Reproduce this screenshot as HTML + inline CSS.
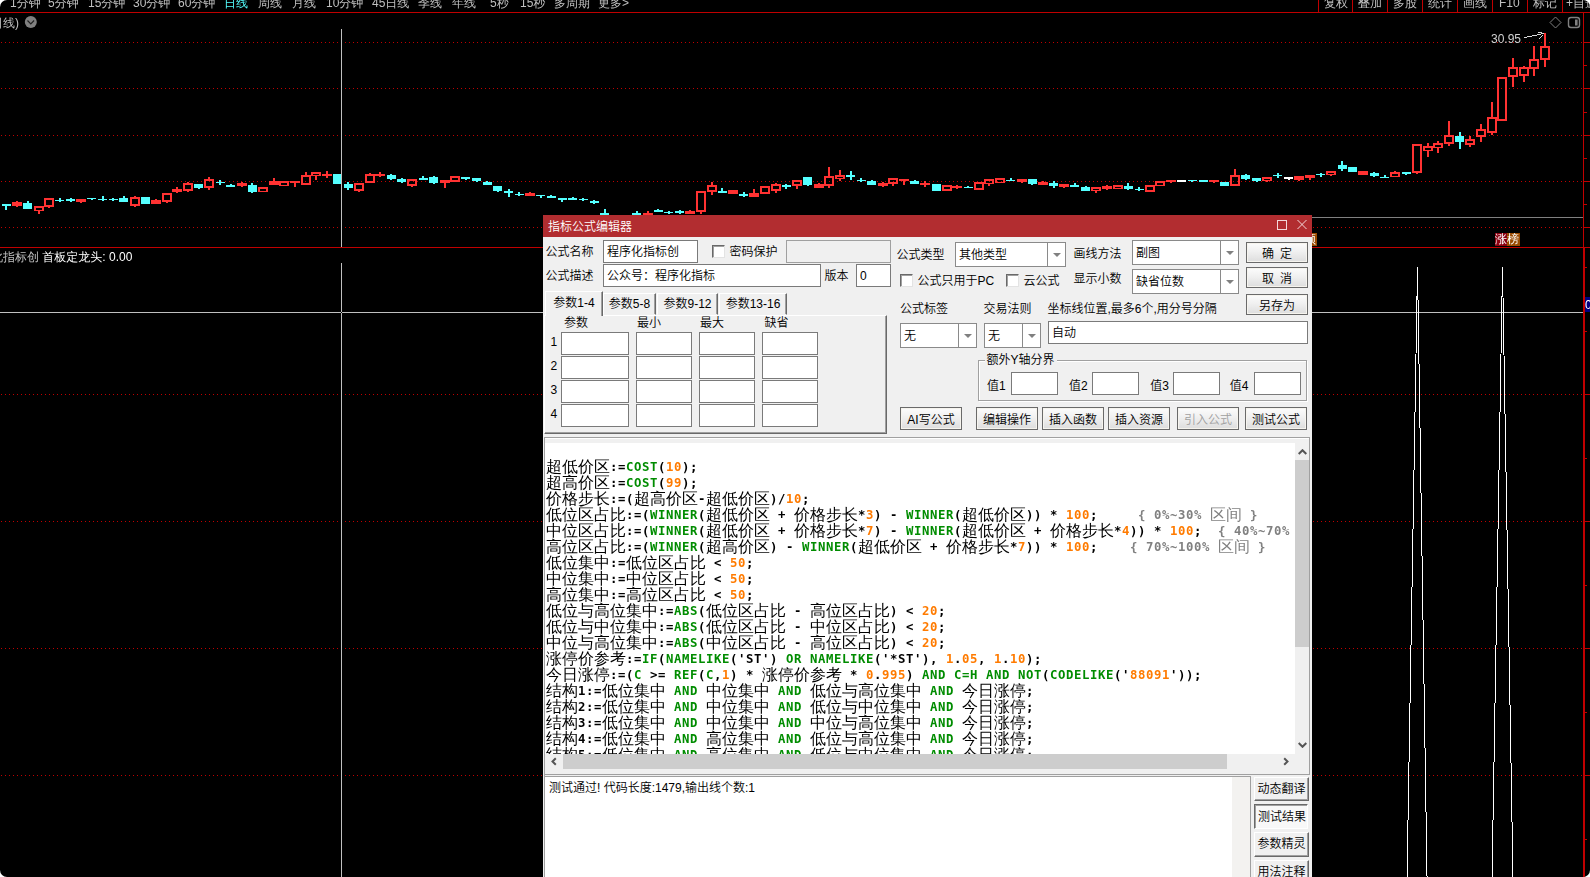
<!DOCTYPE html><html lang="zh-CN"><head><meta charset="utf-8"><title>指标公式编辑器</title>
<style>html,body{margin:0;padding:0;background:#fff}
body{width:1590px;height:877px;overflow:hidden;position:relative;}
#root{position:absolute;left:0;top:0;width:1590px;height:877px;overflow:hidden;background:#000;border-radius:7px;font-family:"Liberation Sans","Noto Sans CJK SC",sans-serif;font-size:12px}
#chart{position:absolute;left:0;top:0}
.t{will-change:transform;font-family:"Liberation Sans","WenQuanYi Zen Hei","Noto Sans CJK SC",sans-serif;position:absolute;white-space:nowrap;color:#C0C0C0;font-size:12px;line-height:14px;height:14px}
.tb{color:#C0C0C0}
#dlg{font-weight:350;position:absolute;left:543px;top:215px;width:769px;height:662px;background:#F0F0F0;color:#000;overflow:hidden}
#dlg div{box-sizing:border-box}
.tt{position:absolute;background:#B22D30;color:#fff}
.tt span{position:absolute;left:5px;top:4px;line-height:16px}
.ti{position:absolute}
.lb{position:absolute;white-space:nowrap;line-height:16px;height:16px}
.in{position:absolute;background:#fff;border:1px solid #7A7A7A}
.in span{position:absolute;left:3px;top:50%;margin-top:-7.5px;line-height:16px;white-space:nowrap}
.in.dis{background:#F0F0F0;border-color:#A0A0A0}
.cb{position:absolute;background:#fff;border:1px solid #8A8A8A}
.cb span{position:absolute;left:3px;top:50%;margin-top:-7.5px;line-height:16px;white-space:nowrap}
.cb i{position:absolute;top:0;bottom:0;width:1px;background:#8A8A8A}
.cb b{position:absolute;top:50%;margin-top:-2px;width:0;height:0;border-left:4px solid transparent;border-right:4px solid transparent;border-top:4px solid #808080}
.ck{position:absolute;background:#fff;border:1px solid;border-color:#696969 #E3E3E3 #E3E3E3 #696969;box-shadow:inset 1px 1px 0 #A0A0A0}
.bt{position:absolute;border:1px solid #6A6A6A;background:linear-gradient(#FCFCFC,#F0F0F0 45%,#DDDDDD);box-shadow:inset 0 0 0 1px #F6F4EE;display:flex;align-items:center;justify-content:center;padding-top:2px;white-space:nowrap;line-height:16px}
.bt.dsb{color:#A0A0A0}
.tab{position:absolute;border:1px solid;border-color:#fff #696969 transparent #fff;box-shadow:inset -1px 0 0 #A0A0A0;text-align:center;line-height:21px;white-space:nowrap;background:#F0F0F0}
.tab.sel{line-height:22px;border-bottom:none}
.pn{position:absolute;border:1px solid;border-color:#fff #696969 #696969 #fff;box-shadow:inset -1px -1px 0 #A0A0A0}
.gb{position:absolute;border:1px solid #A0A0A0;box-shadow:inset 1px 1px 0 #fff, 1px 1px 0 #fff}
.gb span{position:absolute;left:5.5px;top:-9px;background:#F0F0F0;padding:0 2px;line-height:16px}
.sb{position:absolute;background:#F0F0F0}
.sb .th{position:absolute;background:#CDCDCD}
.sb .ar{position:absolute}
.rb{position:absolute;border:1px solid;border-color:#fff #696969 #696969 #fff;box-shadow:inset -1px -1px 0 #A0A0A0;text-align:center;line-height:22px;white-space:nowrap;background:#F0F0F0}
.rb.dn{padding:1px 0 0 2px;border-color:#696969 #fff #fff #696969;box-shadow:inset 1px 1px 0 #A0A0A0;background:#F8F8F8}
#ed{position:absolute;left:2px;top:228px;width:750px;height:311px;background:#fff;overflow:hidden}
#code{position:absolute;left:1px;top:16px;will-change:transform}
.ln{height:16px;line-height:16px;white-space:pre;font-size:0}
.ln span{vertical-align:top;display:inline-block;height:16px;line-height:16px}
.ln .cm{display:inline}
.z{font-family:"Liberation Mono","WenQuanYi Zen Hei","Noto Serif CJK SC",monospace;font-size:16px;font-weight:400;color:#000;position:relative;top:1px}
.a{font-family:"DejaVu Sans Mono","Liberation Mono",monospace;font-size:12.3px;letter-spacing:0.5948px;font-weight:bold;color:#000}
.a.k{color:#008C00}
.a.n{color:#FF7B00}
.cm .a,.cm .z{color:#808080}
</style>
</head><body><div id="root">
<svg id="chart" width="1590" height="877" viewBox="0 0 1590 877" shape-rendering="crispEdges">
<line x1="1" x2="1583" y1="42.5" y2="42.5" stroke="#C00000" stroke-dasharray="1 3"/>
<line x1="1584" x2="1590" y1="42.5" y2="42.5" stroke="#C00000"/>
<line x1="1" x2="1583" y1="88.5" y2="88.5" stroke="#C00000" stroke-dasharray="1 3"/>
<line x1="1584" x2="1590" y1="88.5" y2="88.5" stroke="#C00000"/>
<line x1="1" x2="1583" y1="135.5" y2="135.5" stroke="#C00000" stroke-dasharray="1 3"/>
<line x1="1584" x2="1590" y1="135.5" y2="135.5" stroke="#C00000"/>
<line x1="1" x2="1583" y1="181.5" y2="181.5" stroke="#C00000" stroke-dasharray="1 3"/>
<line x1="1584" x2="1590" y1="181.5" y2="181.5" stroke="#C00000"/>
<line x1="1" x2="1583" y1="227.5" y2="227.5" stroke="#C00000" stroke-dasharray="1 3"/>
<line x1="1584" x2="1590" y1="227.5" y2="227.5" stroke="#C00000"/>
<line x1="1584" x2="1587" y1="65.5" y2="65.5" stroke="#C00000"/>
<line x1="1584" x2="1587" y1="112.5" y2="112.5" stroke="#C00000"/>
<line x1="1584" x2="1587" y1="158.5" y2="158.5" stroke="#C00000"/>
<line x1="1584" x2="1587" y1="204.5" y2="204.5" stroke="#C00000"/>
<line x1="1" x2="1583" y1="394.5" y2="394.5" stroke="#C00000" stroke-dasharray="1 3"/>
<line x1="1584" x2="1590" y1="394.5" y2="394.5" stroke="#C00000"/>
<line x1="1" x2="1583" y1="521.5" y2="521.5" stroke="#C00000" stroke-dasharray="1 3"/>
<line x1="1584" x2="1590" y1="521.5" y2="521.5" stroke="#C00000"/>
<line x1="1" x2="1583" y1="648.5" y2="648.5" stroke="#C00000" stroke-dasharray="1 3"/>
<line x1="1584" x2="1590" y1="648.5" y2="648.5" stroke="#C00000"/>
<line x1="1" x2="1583" y1="775.5" y2="775.5" stroke="#C00000" stroke-dasharray="1 3"/>
<line x1="1584" x2="1590" y1="775.5" y2="775.5" stroke="#C00000"/>
<line x1="1584" x2="1587" y1="267.5" y2="267.5" stroke="#C00000"/>
<line x1="1584" x2="1587" y1="331.5" y2="331.5" stroke="#C00000"/>
<line x1="1584" x2="1587" y1="458.5" y2="458.5" stroke="#C00000"/>
<line x1="1584" x2="1587" y1="585.5" y2="585.5" stroke="#C00000"/>
<line x1="1584" x2="1587" y1="712.5" y2="712.5" stroke="#C00000"/>
<line x1="1584" x2="1587" y1="839.5" y2="839.5" stroke="#C00000"/>
<rect x="0" y="12" width="1590" height="1" fill="#C00000"/>
<rect x="0" y="247" width="1590" height="1" fill="#C00000"/>
<rect x="1583" y="12" width="1" height="865" fill="#C00000"/><rect x="1584" y="248" width="1" height="629" fill="#C00000"/>
<rect x="1318" y="0" width="1" height="12" fill="#C00000"/>
<rect x="1352" y="0" width="1" height="12" fill="#C00000"/>
<rect x="1387" y="0" width="1" height="12" fill="#C00000"/>
<rect x="1422" y="0" width="1" height="12" fill="#C00000"/>
<rect x="1457" y="0" width="1" height="12" fill="#C00000"/>
<rect x="1492" y="0" width="1" height="12" fill="#C00000"/>
<rect x="1527" y="0" width="1" height="12" fill="#C00000"/>
<rect x="1562" y="0" width="1" height="12" fill="#C00000"/>
<rect x="1312" y="217" width="271" height="1" fill="#808080"/>
<rect x="5" y="204" width="2" height="6" fill="#54FFFF"/>
<rect x="2" y="204" width="9" height="2" fill="#54FFFF"/>
<rect x="16" y="201" width="2" height="6" fill="#FF3232"/>
<rect x="12" y="202" width="10" height="4" fill="#FF3232"/>
<rect x="27" y="201" width="2" height="8" fill="#54FFFF"/>
<rect x="23" y="203" width="9" height="6" fill="#54FFFF"/>
<rect x="38" y="211" width="2" height="3" fill="#FF3232"/>
<path d="M34 206h10v5h-10z M36 207.5v2.0h6v-2.0z" fill="#FF3232" fill-rule="evenodd"/>
<rect x="48" y="207" width="2" height="1" fill="#FF3232"/>
<path d="M44 198h10v9h-10z M46 200v5h6v-5z" fill="#FF3232" fill-rule="evenodd"/>
<rect x="59" y="198" width="2" height="4" fill="#54FFFF"/>
<rect x="55" y="200" width="9" height="1" fill="#54FFFF"/>
<rect x="70" y="198" width="2" height="4" fill="#54FFFF"/>
<rect x="66" y="199" width="9" height="2" fill="#54FFFF"/>
<rect x="80" y="199" width="2" height="4" fill="#FF3232"/>
<rect x="76" y="199" width="10" height="3" fill="#FF3232"/>
<rect x="91" y="198" width="2" height="2" fill="#54FFFF"/>
<rect x="87" y="198" width="9" height="1" fill="#54FFFF"/>
<rect x="102" y="196" width="2" height="5" fill="#54FFFF"/>
<rect x="98" y="199" width="9" height="1" fill="#54FFFF"/>
<rect x="112" y="198" width="2" height="3" fill="#54FFFF"/>
<rect x="109" y="199" width="9" height="1" fill="#54FFFF"/>
<rect x="123" y="196" width="2" height="6" fill="#54FFFF"/>
<rect x="119" y="198" width="9" height="4" fill="#54FFFF"/>
<rect x="134" y="196" width="2" height="1" fill="#FF3232"/>
<rect x="134" y="206" width="2" height="1" fill="#FF3232"/>
<path d="M130 197h10v9h-10z M132 199v5h6v-5z" fill="#FF3232" fill-rule="evenodd"/>
<rect x="144" y="197" width="2" height="7" fill="#54FFFF"/>
<rect x="141" y="197" width="9" height="7" fill="#54FFFF"/>
<rect x="155" y="199" width="2" height="5" fill="#FF3232"/>
<rect x="151" y="200" width="10" height="4" fill="#FF3232"/>
<rect x="166" y="202" width="2" height="1" fill="#FF3232"/>
<path d="M162 193h10v9h-10z M164 195v5h6v-5z" fill="#FF3232" fill-rule="evenodd"/>
<rect x="176" y="187" width="2" height="6" fill="#FF3232"/>
<rect x="172" y="189" width="10" height="3" fill="#FF3232"/>
<rect x="187" y="182" width="2" height="1" fill="#FF3232"/>
<rect x="187" y="191" width="2" height="1" fill="#FF3232"/>
<path d="M183 183h10v8h-10z M185 185v4h6v-4z" fill="#FF3232" fill-rule="evenodd"/>
<rect x="198" y="184" width="2" height="5" fill="#54FFFF"/>
<rect x="194" y="184" width="9" height="4" fill="#54FFFF"/>
<rect x="208" y="177" width="2" height="2" fill="#FF3232"/>
<rect x="208" y="188" width="2" height="2" fill="#FF3232"/>
<path d="M204 179h10v9h-10z M206 181v5h6v-5z" fill="#FF3232" fill-rule="evenodd"/>
<rect x="219" y="180" width="2" height="5" fill="#54FFFF"/>
<rect x="216" y="182" width="9" height="1" fill="#54FFFF"/>
<rect x="230" y="184" width="2" height="3" fill="#54FFFF"/>
<rect x="226" y="185" width="9" height="2" fill="#54FFFF"/>
<rect x="241" y="182" width="2" height="5" fill="#FF3232"/>
<rect x="237" y="183" width="10" height="3" fill="#FF3232"/>
<rect x="251" y="183" width="2" height="10" fill="#54FFFF"/>
<rect x="248" y="185" width="9" height="7" fill="#54FFFF"/>
<path d="M258 187h10v5h-10z M260 188.5v2.0h6v-2.0z" fill="#FF3232" fill-rule="evenodd"/>
<rect x="273" y="178" width="2" height="7" fill="#FF3232"/>
<rect x="269" y="181" width="10" height="4" fill="#FF3232"/>
<path d="M279 181h10v5h-10z M281 182.5v2.0h6v-2.0z" fill="#FF3232" fill-rule="evenodd"/>
<rect x="294" y="181" width="2" height="6" fill="#FF3232"/>
<rect x="290" y="181" width="10" height="2" fill="#FF3232"/>
<rect x="305" y="172" width="2" height="3" fill="#FF3232"/>
<path d="M301 175h10v10h-10z M303 177v6h6v-6z" fill="#FF3232" fill-rule="evenodd"/>
<rect x="315" y="176" width="2" height="4" fill="#FF3232"/>
<path d="M311 172h10v4h-10z M313 173.5v1.0h6v-1.0z" fill="#FF3232" fill-rule="evenodd"/>
<rect x="326" y="171" width="2" height="7" fill="#FF3232"/>
<rect x="322" y="174" width="10" height="2" fill="#FF3232"/>
<rect x="337" y="174" width="2" height="10" fill="#54FFFF"/>
<rect x="333" y="174" width="9" height="10" fill="#54FFFF"/>
<rect x="347" y="182" width="2" height="8" fill="#54FFFF"/>
<rect x="344" y="184" width="9" height="4" fill="#54FFFF"/>
<rect x="358" y="191" width="2" height="1" fill="#FF3232"/>
<path d="M354 183h10v8h-10z M356 185v4h6v-4z" fill="#FF3232" fill-rule="evenodd"/>
<rect x="369" y="173" width="2" height="1" fill="#FF3232"/>
<path d="M365 174h10v9h-10z M367 176v5h6v-5z" fill="#FF3232" fill-rule="evenodd"/>
<rect x="379" y="172" width="2" height="5" fill="#FF3232"/>
<rect x="375" y="174" width="10" height="2" fill="#FF3232"/>
<rect x="390" y="174" width="2" height="6" fill="#54FFFF"/>
<rect x="387" y="175" width="9" height="4" fill="#54FFFF"/>
<rect x="401" y="178" width="2" height="5" fill="#54FFFF"/>
<rect x="397" y="179" width="9" height="3" fill="#54FFFF"/>
<rect x="411" y="186" width="2" height="1" fill="#FF3232"/>
<path d="M407 179h10v7h-10z M409 181v3h6v-3z" fill="#FF3232" fill-rule="evenodd"/>
<rect x="422" y="176" width="2" height="4" fill="#54FFFF"/>
<rect x="419" y="178" width="9" height="2" fill="#54FFFF"/>
<rect x="433" y="176" width="2" height="8" fill="#54FFFF"/>
<rect x="429" y="177" width="9" height="6" fill="#54FFFF"/>
<rect x="444" y="180" width="2" height="8" fill="#FF3232"/>
<rect x="440" y="180" width="10" height="3" fill="#FF3232"/>
<path d="M450 176h10v6h-10z M452 178v2h6v-2z" fill="#FF3232" fill-rule="evenodd"/>
<rect x="465" y="177" width="2" height="3" fill="#54FFFF"/>
<rect x="461" y="177" width="9" height="2" fill="#54FFFF"/>
<rect x="476" y="178" width="2" height="4" fill="#54FFFF"/>
<rect x="472" y="178" width="9" height="3" fill="#54FFFF"/>
<rect x="486" y="181" width="2" height="4" fill="#54FFFF"/>
<rect x="483" y="182" width="9" height="3" fill="#54FFFF"/>
<rect x="497" y="186" width="2" height="6" fill="#54FFFF"/>
<rect x="493" y="186" width="9" height="5" fill="#54FFFF"/>
<rect x="508" y="189" width="2" height="8" fill="#54FFFF"/>
<rect x="504" y="191" width="9" height="2" fill="#54FFFF"/>
<rect x="518" y="192" width="2" height="4" fill="#54FFFF"/>
<rect x="515" y="194" width="9" height="1" fill="#54FFFF"/>
<rect x="529" y="192" width="2" height="4" fill="#FF3232"/>
<rect x="525" y="193" width="10" height="3" fill="#FF3232"/>
<rect x="540" y="195" width="2" height="3" fill="#54FFFF"/>
<rect x="536" y="195" width="9" height="1" fill="#54FFFF"/>
<rect x="550" y="195" width="2" height="3" fill="#54FFFF"/>
<rect x="547" y="196" width="9" height="2" fill="#54FFFF"/>
<rect x="561" y="198" width="2" height="4" fill="#54FFFF"/>
<rect x="558" y="198" width="9" height="2" fill="#54FFFF"/>
<rect x="572" y="197" width="2" height="3" fill="#54FFFF"/>
<rect x="568" y="198" width="9" height="2" fill="#54FFFF"/>
<rect x="582" y="198" width="2" height="3" fill="#54FFFF"/>
<rect x="579" y="199" width="9" height="1" fill="#54FFFF"/>
<rect x="593" y="200" width="2" height="4" fill="#54FFFF"/>
<rect x="590" y="201" width="9" height="2" fill="#54FFFF"/>
<rect x="604" y="209" width="2" height="6" fill="#54FFFF"/>
<rect x="600" y="213" width="9" height="2" fill="#54FFFF"/>
<rect x="614" y="216" width="2" height="3" fill="#54FFFF"/>
<rect x="611" y="216" width="9" height="2" fill="#54FFFF"/>
<rect x="625" y="215" width="2" height="4" fill="#54FFFF"/>
<rect x="622" y="216" width="9" height="2" fill="#54FFFF"/>
<rect x="636" y="211" width="2" height="4" fill="#54FFFF"/>
<rect x="632" y="213" width="9" height="2" fill="#54FFFF"/>
<rect x="647" y="211" width="2" height="4" fill="#FF3232"/>
<rect x="643" y="213" width="10" height="2" fill="#FF3232"/>
<rect x="657" y="209" width="2" height="3" fill="#54FFFF"/>
<rect x="654" y="210" width="9" height="2" fill="#54FFFF"/>
<rect x="668" y="211" width="2" height="3" fill="#54FFFF"/>
<rect x="664" y="212" width="9" height="1" fill="#54FFFF"/>
<rect x="679" y="210" width="2" height="4" fill="#54FFFF"/>
<rect x="675" y="211" width="9" height="2" fill="#54FFFF"/>
<rect x="689" y="210" width="2" height="4" fill="#FF3232"/>
<rect x="685" y="211" width="10" height="3" fill="#FF3232"/>
<rect x="700" y="212" width="2" height="2" fill="#FF3232"/>
<path d="M696 191h10v21h-10z M698 193v17h6v-17z" fill="#FF3232" fill-rule="evenodd"/>
<rect x="711" y="182" width="2" height="3" fill="#FF3232"/>
<rect x="711" y="192" width="2" height="3" fill="#FF3232"/>
<path d="M707 185h10v7h-10z M709 187v3h6v-3z" fill="#FF3232" fill-rule="evenodd"/>
<rect x="721" y="188" width="2" height="5" fill="#54FFFF"/>
<rect x="718" y="191" width="9" height="2" fill="#54FFFF"/>
<rect x="732" y="190" width="2" height="4" fill="#FF3232"/>
<rect x="728" y="190" width="10" height="4" fill="#FF3232"/>
<rect x="743" y="192" width="2" height="5" fill="#54FFFF"/>
<rect x="739" y="194" width="9" height="2" fill="#54FFFF"/>
<rect x="753" y="189" width="2" height="8" fill="#FF3232"/>
<rect x="749" y="193" width="10" height="4" fill="#FF3232"/>
<path d="M760 186h10v8h-10z M762 188v4h6v-4z" fill="#FF3232" fill-rule="evenodd"/>
<rect x="775" y="183" width="2" height="1" fill="#FF3232"/>
<rect x="775" y="191" width="2" height="2" fill="#FF3232"/>
<path d="M771 184h10v7h-10z M773 186v3h6v-3z" fill="#FF3232" fill-rule="evenodd"/>
<rect x="785" y="184" width="2" height="5" fill="#54FFFF"/>
<rect x="782" y="185" width="9" height="2" fill="#54FFFF"/>
<rect x="796" y="186" width="2" height="3" fill="#FF3232"/>
<path d="M792 180h10v6h-10z M794 182v2h6v-2z" fill="#FF3232" fill-rule="evenodd"/>
<rect x="807" y="177" width="2" height="9" fill="#54FFFF"/>
<rect x="803" y="177" width="9" height="8" fill="#54FFFF"/>
<rect x="818" y="183" width="2" height="5" fill="#FF3232"/>
<rect x="814" y="184" width="10" height="4" fill="#FF3232"/>
<rect x="828" y="167" width="2" height="9" fill="#FF3232"/>
<rect x="828" y="186" width="2" height="2" fill="#FF3232"/>
<path d="M824 176h10v10h-10z M826 178v6h6v-6z" fill="#FF3232" fill-rule="evenodd"/>
<rect x="839" y="170" width="2" height="5" fill="#FF3232"/>
<rect x="839" y="179" width="2" height="2" fill="#FF3232"/>
<path d="M835 175h10v4h-10z M837 176.5v1.0h6v-1.0z" fill="#FF3232" fill-rule="evenodd"/>
<rect x="850" y="171" width="2" height="9" fill="#54FFFF"/>
<rect x="846" y="175" width="9" height="2" fill="#54FFFF"/>
<rect x="860" y="178" width="2" height="4" fill="#54FFFF"/>
<rect x="857" y="180" width="9" height="1" fill="#54FFFF"/>
<rect x="871" y="180" width="2" height="5" fill="#54FFFF"/>
<rect x="867" y="181" width="9" height="4" fill="#54FFFF"/>
<rect x="882" y="182" width="2" height="5" fill="#FF3232"/>
<rect x="878" y="183" width="10" height="3" fill="#FF3232"/>
<rect x="892" y="184" width="2" height="2" fill="#FF3232"/>
<path d="M888 178h10v6h-10z M890 180v2h6v-2z" fill="#FF3232" fill-rule="evenodd"/>
<rect x="903" y="179" width="2" height="6" fill="#FF3232"/>
<rect x="899" y="179" width="10" height="2" fill="#FF3232"/>
<rect x="914" y="180" width="2" height="4" fill="#54FFFF"/>
<rect x="910" y="181" width="9" height="3" fill="#54FFFF"/>
<rect x="924" y="181" width="2" height="6" fill="#FF3232"/>
<rect x="920" y="183" width="10" height="2" fill="#FF3232"/>
<rect x="935" y="184" width="2" height="7" fill="#54FFFF"/>
<rect x="932" y="184" width="9" height="7" fill="#54FFFF"/>
<path d="M942 185h10v6h-10z M944 187v2h6v-2z" fill="#FF3232" fill-rule="evenodd"/>
<rect x="956" y="185" width="2" height="4" fill="#FF3232"/>
<rect x="952" y="186" width="10" height="2" fill="#FF3232"/>
<rect x="967" y="186" width="2" height="2" fill="#54FFFF"/>
<rect x="964" y="187" width="9" height="1" fill="#54FFFF"/>
<path d="M974 182h10v8h-10z M976 184v4h6v-4z" fill="#FF3232" fill-rule="evenodd"/>
<rect x="988" y="184" width="2" height="2" fill="#FF3232"/>
<path d="M984 179h10v5h-10z M986 180.5v2.0h6v-2.0z" fill="#FF3232" fill-rule="evenodd"/>
<path d="M995 178h10v5h-10z M997 179.5v2.0h6v-2.0z" fill="#FF3232" fill-rule="evenodd"/>
<rect x="1010" y="178" width="2" height="3" fill="#54FFFF"/>
<rect x="1006" y="180" width="9" height="1" fill="#54FFFF"/>
<rect x="1021" y="179" width="2" height="4" fill="#FF3232"/>
<rect x="1017" y="179" width="10" height="3" fill="#FF3232"/>
<rect x="1031" y="179" width="2" height="6" fill="#54FFFF"/>
<rect x="1028" y="179" width="9" height="5" fill="#54FFFF"/>
<rect x="1042" y="181" width="2" height="4" fill="#FF3232"/>
<rect x="1038" y="182" width="10" height="3" fill="#FF3232"/>
<rect x="1053" y="181" width="2" height="7" fill="#54FFFF"/>
<rect x="1049" y="183" width="9" height="3" fill="#54FFFF"/>
<rect x="1063" y="184" width="2" height="4" fill="#FF3232"/>
<rect x="1059" y="184" width="10" height="3" fill="#FF3232"/>
<rect x="1074" y="183" width="2" height="4" fill="#54FFFF"/>
<rect x="1070" y="185" width="9" height="2" fill="#54FFFF"/>
<rect x="1085" y="186" width="2" height="5" fill="#54FFFF"/>
<rect x="1081" y="187" width="9" height="4" fill="#54FFFF"/>
<rect x="1095" y="191" width="2" height="2" fill="#FF3232"/>
<path d="M1091 187h10v4h-10z M1093 188.5v1.0h6v-1.0z" fill="#FF3232" fill-rule="evenodd"/>
<rect x="1106" y="185" width="2" height="5" fill="#FF3232"/>
<rect x="1102" y="186" width="10" height="3" fill="#FF3232"/>
<path d="M1113 185h10v4h-10z M1115 186.5v1.0h6v-1.0z" fill="#FF3232" fill-rule="evenodd"/>
<rect x="1127" y="183" width="2" height="7" fill="#54FFFF"/>
<rect x="1124" y="186" width="9" height="3" fill="#54FFFF"/>
<rect x="1138" y="187" width="2" height="4" fill="#54FFFF"/>
<rect x="1135" y="189" width="9" height="1" fill="#54FFFF"/>
<path d="M1145 185h10v7h-10z M1147 187v3h6v-3z" fill="#FF3232" fill-rule="evenodd"/>
<path d="M1155 181h10v5h-10z M1157 182.5v2.0h6v-2.0z" fill="#FF3232" fill-rule="evenodd"/>
<rect x="1170" y="180" width="2" height="3" fill="#FF3232"/>
<rect x="1166" y="180" width="10" height="2" fill="#FF3232"/>
<rect x="1181" y="180" width="2" height="2" fill="#FFFFFF"/>
<rect x="1177" y="180" width="9" height="2" fill="#FFFFFF"/>
<rect x="1191" y="180" width="2" height="2" fill="#54FFFF"/>
<rect x="1188" y="180" width="9" height="1" fill="#54FFFF"/>
<rect x="1202" y="180" width="2" height="2" fill="#54FFFF"/>
<rect x="1199" y="180" width="9" height="2" fill="#54FFFF"/>
<rect x="1213" y="180" width="2" height="3" fill="#FF3232"/>
<rect x="1209" y="180" width="10" height="2" fill="#FF3232"/>
<rect x="1224" y="182" width="2" height="4" fill="#54FFFF"/>
<rect x="1220" y="182" width="9" height="4" fill="#54FFFF"/>
<rect x="1234" y="169" width="2" height="6" fill="#FF3232"/>
<path d="M1230 175h10v11h-10z M1232 177v7h6v-7z" fill="#FF3232" fill-rule="evenodd"/>
<rect x="1245" y="174" width="2" height="6" fill="#54FFFF"/>
<rect x="1241" y="175" width="9" height="4" fill="#54FFFF"/>
<rect x="1256" y="178" width="2" height="4" fill="#54FFFF"/>
<rect x="1252" y="178" width="9" height="3" fill="#54FFFF"/>
<rect x="1266" y="181" width="2" height="1" fill="#FF3232"/>
<path d="M1262 177h10v4h-10z M1264 178.5v1.0h6v-1.0z" fill="#FF3232" fill-rule="evenodd"/>
<rect x="1277" y="173" width="2" height="5" fill="#54FFFF"/>
<rect x="1273" y="175" width="9" height="1" fill="#54FFFF"/>
<rect x="1288" y="177" width="2" height="3" fill="#FFFFFF"/>
<rect x="1284" y="177" width="9" height="2" fill="#FFFFFF"/>
<rect x="1298" y="176" width="2" height="5" fill="#FF3232"/>
<rect x="1294" y="176" width="10" height="4" fill="#FF3232"/>
<rect x="1309" y="175" width="2" height="5" fill="#FF3232"/>
<rect x="1305" y="175" width="10" height="3" fill="#FF3232"/>
<rect x="1320" y="173" width="2" height="4" fill="#54FFFF"/>
<rect x="1316" y="174" width="9" height="1" fill="#54FFFF"/>
<rect x="1330" y="175" width="2" height="1" fill="#FF3232"/>
<path d="M1326 171h10v4h-10z M1328 172.5v1.0h6v-1.0z" fill="#FF3232" fill-rule="evenodd"/>
<rect x="1341" y="161" width="2" height="10" fill="#54FFFF"/>
<rect x="1338" y="165" width="9" height="4" fill="#54FFFF"/>
<rect x="1352" y="167" width="2" height="5" fill="#54FFFF"/>
<rect x="1348" y="167" width="9" height="5" fill="#54FFFF"/>
<rect x="1362" y="171" width="2" height="4" fill="#FF3232"/>
<rect x="1358" y="171" width="10" height="4" fill="#FF3232"/>
<rect x="1373" y="172" width="2" height="5" fill="#54FFFF"/>
<rect x="1370" y="173" width="9" height="3" fill="#54FFFF"/>
<rect x="1384" y="175" width="2" height="3" fill="#54FFFF"/>
<rect x="1380" y="177" width="9" height="1" fill="#54FFFF"/>
<rect x="1394" y="171" width="2" height="1" fill="#FF3232"/>
<path d="M1390 172h10v5h-10z M1392 173.5v2.0h6v-2.0z" fill="#FF3232" fill-rule="evenodd"/>
<rect x="1405" y="172" width="2" height="3" fill="#54FFFF"/>
<rect x="1402" y="172" width="9" height="2" fill="#54FFFF"/>
<rect x="1416" y="173" width="2" height="1" fill="#FF3232"/>
<path d="M1412 144h10v29h-10z M1414 146v25h6v-25z" fill="#FF3232" fill-rule="evenodd"/>
<rect x="1427" y="143" width="2" height="3" fill="#FF3232"/>
<rect x="1427" y="151" width="2" height="6" fill="#FF3232"/>
<path d="M1423 146h10v5h-10z M1425 147.5v2.0h6v-2.0z" fill="#FF3232" fill-rule="evenodd"/>
<rect x="1437" y="141" width="2" height="2" fill="#FF3232"/>
<rect x="1437" y="148" width="2" height="5" fill="#FF3232"/>
<path d="M1433 143h10v5h-10z M1435 144.5v2.0h6v-2.0z" fill="#FF3232" fill-rule="evenodd"/>
<rect x="1448" y="121" width="2" height="14" fill="#FF3232"/>
<rect x="1448" y="144" width="2" height="2" fill="#FF3232"/>
<path d="M1444 135h10v9h-10z M1446 137v5h6v-5z" fill="#FF3232" fill-rule="evenodd"/>
<rect x="1459" y="132" width="2" height="17" fill="#54FFFF"/>
<rect x="1455" y="136" width="9" height="6" fill="#54FFFF"/>
<rect x="1469" y="136" width="2" height="3" fill="#FF3232"/>
<rect x="1469" y="145" width="2" height="2" fill="#FF3232"/>
<path d="M1465 139h10v6h-10z M1467 141v2h6v-2z" fill="#FF3232" fill-rule="evenodd"/>
<rect x="1480" y="124" width="2" height="5" fill="#FF3232"/>
<rect x="1480" y="137" width="2" height="5" fill="#FF3232"/>
<path d="M1476 129h10v8h-10z M1478 131v4h6v-4z" fill="#FF3232" fill-rule="evenodd"/>
<rect x="1491" y="102" width="2" height="15" fill="#FF3232"/>
<rect x="1491" y="133" width="2" height="2" fill="#FF3232"/>
<path d="M1487 117h10v16h-10z M1489 119v12h6v-12z" fill="#FF3232" fill-rule="evenodd"/>
<path d="M1497 77h10v44h-10z M1499 79v40h6v-40z" fill="#FF3232" fill-rule="evenodd"/>
<rect x="1512" y="58" width="2" height="9" fill="#FF3232"/>
<rect x="1512" y="77" width="2" height="10" fill="#FF3232"/>
<path d="M1508 67h10v10h-10z M1510 69v6h6v-6z" fill="#FF3232" fill-rule="evenodd"/>
<rect x="1523" y="66" width="2" height="1" fill="#FF3232"/>
<rect x="1523" y="76" width="2" height="6" fill="#FF3232"/>
<path d="M1519 67h10v9h-10z M1521 69v5h6v-5z" fill="#FF3232" fill-rule="evenodd"/>
<rect x="1533" y="46" width="2" height="13" fill="#FF3232"/>
<rect x="1533" y="69" width="2" height="7" fill="#FF3232"/>
<path d="M1529 59h10v10h-10z M1531 61v6h6v-6z" fill="#FF3232" fill-rule="evenodd"/>
<rect x="1544" y="33" width="2" height="13" fill="#FF3232"/>
<rect x="1544" y="60" width="2" height="7" fill="#FF3232"/>
<path d="M1540 46h10v14h-10z M1542 48v10h6v-10z" fill="#FF3232" fill-rule="evenodd"/>
<rect x="341" y="29" width="1" height="218" fill="#C0C0C0"/>
<rect x="341" y="263" width="1" height="614" fill="#C0C0C0"/>
<rect x="0" y="312" width="1583" height="1" fill="#C0C0C0"/><rect x="341" y="312" width="1" height="1" fill="#000"/>
<polyline points="1406.3,920 1417.5,267 1427.7,920" fill="none" stroke="#FFFFFF" stroke-width="1"/>
<polyline points="1491.3,920 1502.5,267 1513.7,920" fill="none" stroke="#FFFFFF" stroke-width="1"/>
<g stroke="#D8D8D8" stroke-width="1" fill="none"><path d="M1524 37.5 H1527 M1527 36.5 H1532 M1532 35.5 H1537 M1537 34.5 H1541 M1541 33.5 H1544 M1538 32.5 H1542 M1542 35.5 H1543 M1541 36.5 H1542 M1540 37.5 H1541 M1539 38.5 H1540"/></g>
<g shape-rendering="auto" fill="none" stroke="#808080"><path d="M1555.5 17 L1561 22.5 L1555.5 28 L1550 22.5 Z"/><rect x="1568.5" y="17.5" width="11" height="10" rx="2.5" stroke-width="1.4"/><rect x="1575" y="19.5" width="2.6" height="6" fill="#808080" stroke="none"/></g>
<g shape-rendering="auto"><circle cx="30.8" cy="22" r="6" fill="#808080"/><path d="M27.5 20.5 L30.8 23.8 L34.1 20.5" fill="none" stroke="#202020" stroke-width="1.2"/></g>
<rect x="1585" y="297" width="5" height="15" fill="#000080"/>
</svg>
<div class="t tb" style="left:10px;top:-4px;">1分钟</div>
<div class="t tb" style="left:48px;top:-4px;">5分钟</div>
<div class="t tb" style="left:88px;top:-4px;">15分钟</div>
<div class="t tb" style="left:133px;top:-4px;">30分钟</div>
<div class="t tb" style="left:178px;top:-4px;">60分钟</div>
<div class="t tb" style="left:224px;top:-4px;color:#54FFFF">日线</div>
<div class="t tb" style="left:258px;top:-4px;">周线</div>
<div class="t tb" style="left:292px;top:-4px;">月线</div>
<div class="t tb" style="left:326px;top:-4px;">10分钟</div>
<div class="t tb" style="left:372px;top:-4px;">45日线</div>
<div class="t tb" style="left:418px;top:-4px;">季线</div>
<div class="t tb" style="left:452px;top:-4px;">年线</div>
<div class="t tb" style="left:490px;top:-4px;">5秒</div>
<div class="t tb" style="left:520px;top:-4px;">15秒</div>
<div class="t tb" style="left:554px;top:-4px;">多周期</div>
<div class="t tb" style="left:598px;top:-4px;">更多&gt;</div>
<div class="t tb" style="left:1324px;top:-4px;">复权</div>
<div class="t tb" style="left:1358px;top:-4px;">叠加</div>
<div class="t tb" style="left:1393px;top:-4px;">多股</div>
<div class="t tb" style="left:1428px;top:-4px;">统计</div>
<div class="t tb" style="left:1463px;top:-4px;">画线</div>
<div class="t tb" style="left:1499px;top:-4px;">F10</div>
<div class="t tb" style="left:1533px;top:-4px;">标记</div>
<div class="t tb" style="left:1566px;top:-4px;">+自选</div>
<div class="t" style="left:-9px;top:16px;">日线)</div>
<div class="t" style="left:-33px;top:250px;"><span style="color:#C0C0C0">程序化指标创</span> <span style="color:#fff">首板定龙头: 0.00</span></div>
<div class="t" style="left:1491px;top:32px;color:#D0D0D0;font-size:12px">30.95</div>
<div class="t" style="left:1495px;top:233px;color:#fff;line-height:13px;height:13px"><span style="background:#8B0010;display:inline-block;width:12px;height:13px">涨</span><span style="background:#9A4A00;display:inline-block;width:13px;height:13px">榜</span></div>
<div class="t" style="left:1304px;top:233px;color:#fff;line-height:13px;height:13px"><span style="background:#9A4A00;display:inline-block;width:13px;height:13px">频</span></div>
<div class="t" style="left:1585px;top:298px;color:#fff;font-size:12px">0</div>
<div id="dlg">
<div class="tt" style="left:0px;top:0px;width:769px;height:22px;"><span>指标公式编辑器</span></div>
<svg class="ti" style="left:734px;top:4px" width="40" height="14" viewBox="0 0 40 14"><rect x="0.5" y="1.5" width="9" height="9" fill="none" stroke="#F3D9DA" stroke-width="1"/><path d="M20.5 1 L29.5 10 M29.5 1 L20.5 10" stroke="#F3D9DA" stroke-width="1" fill="none"/></svg>
<div class="lb" style="left:2.5px;top:29.0px;">公式名称</div>
<div class="in" style="left:60px;top:25px;width:95px;height:23px;"><span>程序化指标创</span></div>
<div class="ck" style="left:169px;top:30px;width:13px;height:13px;"></div>
<div class="lb" style="left:186.5px;top:29.0px;">密码保护</div>
<div class="in dis" style="left:243px;top:25px;width:105px;height:23px;"></div>
<div class="lb" style="left:2.5px;top:53.2px;">公式描述</div>
<div class="in" style="left:60px;top:49px;width:218px;height:23px;"><span>公众号：程序化指标</span></div>
<div class="lb" style="left:281.5px;top:53.2px;">版本</div>
<div class="in" style="left:313px;top:49px;width:35px;height:23px;"><span>0</span></div>
<div class="lb" style="left:353.5px;top:31.5px;">公式类型</div>
<div class="cb" style="left:412px;top:27px;width:111px;height:25px;"><span>其他类型</span><i style="left:91px"></i><b style="left:97px"></b></div>
<div class="ck" style="left:357px;top:59px;width:13px;height:13px;"></div>
<div class="lb" style="left:374.5px;top:58.1px;">公式只用于PC</div>
<div class="ck" style="left:463px;top:59px;width:13px;height:13px;"></div>
<div class="lb" style="left:480.5px;top:58.1px;">云公式</div>
<div class="lb" style="left:530.5px;top:31.1px;">画线方法</div>
<div class="lb" style="left:530.5px;top:56.0px;">显示小数</div>
<div class="cb" style="left:589px;top:25px;width:107px;height:25px;"><span>副图</span><i style="left:87px"></i><b style="left:93px"></b></div>
<div class="cb" style="left:589px;top:54px;width:107px;height:25px;"><span>缺省位数</span><i style="left:87px"></i><b style="left:93px"></b></div>
<div class="bt" style="left:703px;top:27px;width:62px;height:21px;">确&#8194;定</div>
<div class="bt" style="left:703px;top:52px;width:62px;height:21px;">取&#8194;消</div>
<div class="bt" style="left:703px;top:79px;width:62px;height:21px;">另存为</div>
<div class="tab" style="left:60px;top:78px;width:53px;height:22px;">参数5-8</div>
<div class="tab" style="left:114px;top:78px;width:61px;height:22px;">参数9-12</div>
<div class="tab" style="left:176px;top:78px;width:68px;height:22px;">参数13-16</div>
<div class="pn" style="left:1px;top:100px;width:343px;height:119px;"></div>
<div class="tab sel" style="left:2px;top:76px;width:58px;height:25px;">参数1-4</div>
<div class="lb" style="left:21.1px;top:100.3px;">参数</div>
<div class="lb" style="left:94.0px;top:100.3px;">最小</div>
<div class="lb" style="left:157.0px;top:100.3px;">最大</div>
<div class="lb" style="left:221.5px;top:100.3px;">缺省</div>
<div class="lb" style="left:7.5px;top:118.9px;">1</div>
<div class="in" style="left:18px;top:117px;width:68px;height:23px;"></div>
<div class="in" style="left:93px;top:117px;width:56px;height:23px;"></div>
<div class="in" style="left:156px;top:117px;width:56px;height:23px;"></div>
<div class="in" style="left:219px;top:117px;width:56px;height:23px;"></div>
<div class="lb" style="left:7.5px;top:143.2px;">2</div>
<div class="in" style="left:18px;top:141px;width:68px;height:23px;"></div>
<div class="in" style="left:93px;top:141px;width:56px;height:23px;"></div>
<div class="in" style="left:156px;top:141px;width:56px;height:23px;"></div>
<div class="in" style="left:219px;top:141px;width:56px;height:23px;"></div>
<div class="lb" style="left:7.5px;top:167.0px;">3</div>
<div class="in" style="left:18px;top:165px;width:68px;height:23px;"></div>
<div class="in" style="left:93px;top:165px;width:56px;height:23px;"></div>
<div class="in" style="left:156px;top:165px;width:56px;height:23px;"></div>
<div class="in" style="left:219px;top:165px;width:56px;height:23px;"></div>
<div class="lb" style="left:7.5px;top:190.9px;">4</div>
<div class="in" style="left:18px;top:189px;width:68px;height:23px;"></div>
<div class="in" style="left:93px;top:189px;width:56px;height:23px;"></div>
<div class="in" style="left:156px;top:189px;width:56px;height:23px;"></div>
<div class="in" style="left:219px;top:189px;width:56px;height:23px;"></div>
<div class="lb" style="left:357.0px;top:86.0px;">公式标签</div>
<div class="lb" style="left:440.5px;top:86.0px;">交易法则</div>
<div class="lb" style="left:504.5px;top:86.0px;">坐标线位置,最多6个,用分号分隔</div>
<div class="cb" style="left:357px;top:108px;width:77px;height:25px;"><span>无</span><i style="left:57px"></i><b style="left:63px"></b></div>
<div class="cb" style="left:441px;top:108px;width:57px;height:25px;"><span>无</span><i style="left:37px"></i><b style="left:43px"></b></div>
<div class="in" style="left:505px;top:106px;width:260px;height:23px;"><span>自动</span></div>
<div class="gb" style="left:435px;top:145px;width:329px;height:41px;"><span>额外Y轴分界</span></div>
<div class="lb" style="left:443.9px;top:162.5px;">值1</div>
<div class="in" style="left:468px;top:157px;width:47px;height:23px;"></div>
<div class="lb" style="left:526.1px;top:162.5px;">值2</div>
<div class="in" style="left:549px;top:157px;width:47px;height:23px;"></div>
<div class="lb" style="left:607.2px;top:162.5px;">值3</div>
<div class="in" style="left:630px;top:157px;width:47px;height:23px;"></div>
<div class="lb" style="left:686.8px;top:162.5px;">值4</div>
<div class="in" style="left:711px;top:157px;width:47px;height:23px;"></div>
<div class="bt" style="left:357px;top:192px;width:62px;height:23px;">AI写公式</div>
<div class="bt" style="left:433px;top:192px;width:62px;height:23px;">编辑操作</div>
<div class="bt" style="left:499px;top:192px;width:62px;height:23px;">插入函数</div>
<div class="bt" style="left:565px;top:192px;width:62px;height:23px;">插入资源</div>
<div class="bt dsb" style="left:634px;top:192px;width:62px;height:23px;">引入公式</div>
<div class="bt" style="left:702px;top:192px;width:62px;height:23px;">测试公式</div>
<div class="" style="left:1px;top:222px;width:766px;height:1px;position:absolute;background:#A0A0A0"></div>
<div class="" style="left:2px;top:223px;width:764px;height:1px;position:absolute;background:#FFFFFF"></div>
<div class="" style="left:766px;top:222px;width:1px;height:337px;position:absolute;background:#A0A0A0"></div>
<div class="" style="left:1px;top:222px;width:1px;height:440px;position:absolute;background:#A0A0A0"></div>
<div id="ed"><div id="code"><div class="ln"><span class="z">超低价区</span><span class="a">:=</span><span class="a k">COST</span><span class="a">(</span><span class="a n">10</span><span class="a">);</span></div><div class="ln"><span class="z">超高价区</span><span class="a">:=</span><span class="a k">COST</span><span class="a">(</span><span class="a n">99</span><span class="a">);</span></div><div class="ln"><span class="z">价格步长</span><span class="a">:=(</span><span class="z">超高价区</span><span class="a">-</span><span class="z">超低价区</span><span class="a">)/</span><span class="a n">10</span><span class="a">;</span></div><div class="ln"><span class="z">低位区占比</span><span class="a">:=(</span><span class="a k">WINNER</span><span class="a">(</span><span class="z">超低价区</span><span class="a"> + </span><span class="z">价格步长</span><span class="a">*</span><span class="a n">3</span><span class="a">) - </span><span class="a k">WINNER</span><span class="a">(</span><span class="z">超低价区</span><span class="a">)) * </span><span class="a n">100</span><span class="a">;     </span><span class="cm"><span class="a">{ 0%~30% </span><span class="z">区间</span><span class="a"> }</span></span></div><div class="ln"><span class="z">中位区占比</span><span class="a">:=(</span><span class="a k">WINNER</span><span class="a">(</span><span class="z">超低价区</span><span class="a"> + </span><span class="z">价格步长</span><span class="a">*</span><span class="a n">7</span><span class="a">) - </span><span class="a k">WINNER</span><span class="a">(</span><span class="z">超低价区</span><span class="a"> + </span><span class="z">价格步长</span><span class="a">*</span><span class="a n">4</span><span class="a">)) * </span><span class="a n">100</span><span class="a">;  </span><span class="cm"><span class="a">{ 40%~70% </span><span class="z">区间</span><span class="a"> }</span></span></div><div class="ln"><span class="z">高位区占比</span><span class="a">:=(</span><span class="a k">WINNER</span><span class="a">(</span><span class="z">超高价区</span><span class="a">) - </span><span class="a k">WINNER</span><span class="a">(</span><span class="z">超低价区</span><span class="a"> + </span><span class="z">价格步长</span><span class="a">*</span><span class="a n">7</span><span class="a">)) * </span><span class="a n">100</span><span class="a">;    </span><span class="cm"><span class="a">{ 70%~100% </span><span class="z">区间</span><span class="a"> }</span></span></div><div class="ln"><span class="z">低位集中</span><span class="a">:=</span><span class="z">低位区占比</span><span class="a"> &lt; </span><span class="a n">50</span><span class="a">;</span></div><div class="ln"><span class="z">中位集中</span><span class="a">:=</span><span class="z">中位区占比</span><span class="a"> &lt; </span><span class="a n">50</span><span class="a">;</span></div><div class="ln"><span class="z">高位集中</span><span class="a">:=</span><span class="z">高位区占比</span><span class="a"> &lt; </span><span class="a n">50</span><span class="a">;</span></div><div class="ln"><span class="z">低位与高位集中</span><span class="a">:=</span><span class="a k">ABS</span><span class="a">(</span><span class="z">低位区占比</span><span class="a"> - </span><span class="z">高位区占比</span><span class="a">) &lt; </span><span class="a n">20</span><span class="a">;</span></div><div class="ln"><span class="z">低位与中位集中</span><span class="a">:=</span><span class="a k">ABS</span><span class="a">(</span><span class="z">低位区占比</span><span class="a"> - </span><span class="z">中位区占比</span><span class="a">) &lt; </span><span class="a n">20</span><span class="a">;</span></div><div class="ln"><span class="z">中位与高位集中</span><span class="a">:=</span><span class="a k">ABS</span><span class="a">(</span><span class="z">中位区占比</span><span class="a"> - </span><span class="z">高位区占比</span><span class="a">) &lt; </span><span class="a n">20</span><span class="a">;</span></div><div class="ln"><span class="z">涨停价参考</span><span class="a">:=</span><span class="a k">IF</span><span class="a">(</span><span class="a k">NAMELIKE</span><span class="a">(</span><span class="a">&#x27;</span><span class="a">ST</span><span class="a">&#x27;</span><span class="a">) </span><span class="a k">OR</span><span class="a"> </span><span class="a k">NAMELIKE</span><span class="a">(</span><span class="a">&#x27;</span><span class="a">*ST</span><span class="a">&#x27;</span><span class="a">), </span><span class="a n">1</span><span class="a">.</span><span class="a n">05</span><span class="a">, </span><span class="a n">1</span><span class="a">.</span><span class="a n">10</span><span class="a">);</span></div><div class="ln"><span class="z">今日涨停</span><span class="a">:=(</span><span class="a k">C</span><span class="a"> &gt;= </span><span class="a k">REF</span><span class="a">(</span><span class="a k">C</span><span class="a">,</span><span class="a n">1</span><span class="a">) * </span><span class="z">涨停价参考</span><span class="a"> * </span><span class="a n">0</span><span class="a">.</span><span class="a n">995</span><span class="a">) </span><span class="a k">AND</span><span class="a"> </span><span class="a k">C</span><span class="a k">=</span><span class="a k">H</span><span class="a"> </span><span class="a k">AND</span><span class="a"> </span><span class="a k">NOT</span><span class="a">(</span><span class="a k">CODELIKE</span><span class="a">(</span><span class="a">&#x27;</span><span class="a n">88091</span><span class="a">&#x27;</span><span class="a">));</span></div><div class="ln"><span class="z">结构</span><span class="a">1</span><span class="a">:=</span><span class="z">低位集中</span><span class="a"> </span><span class="a k">AND</span><span class="a"> </span><span class="z">中位集中</span><span class="a"> </span><span class="a k">AND</span><span class="a"> </span><span class="z">低位与高位集中</span><span class="a"> </span><span class="a k">AND</span><span class="a"> </span><span class="z">今日涨停</span><span class="a">;</span></div><div class="ln"><span class="z">结构</span><span class="a">2</span><span class="a">:=</span><span class="z">低位集中</span><span class="a"> </span><span class="a k">AND</span><span class="a"> </span><span class="z">中位集中</span><span class="a"> </span><span class="a k">AND</span><span class="a"> </span><span class="z">低位与中位集中</span><span class="a"> </span><span class="a k">AND</span><span class="a"> </span><span class="z">今日涨停</span><span class="a">;</span></div><div class="ln"><span class="z">结构</span><span class="a">3</span><span class="a">:=</span><span class="z">低位集中</span><span class="a"> </span><span class="a k">AND</span><span class="a"> </span><span class="z">中位集中</span><span class="a"> </span><span class="a k">AND</span><span class="a"> </span><span class="z">中位与高位集中</span><span class="a"> </span><span class="a k">AND</span><span class="a"> </span><span class="z">今日涨停</span><span class="a">;</span></div><div class="ln"><span class="z">结构</span><span class="a">4</span><span class="a">:=</span><span class="z">低位集中</span><span class="a"> </span><span class="a k">AND</span><span class="a"> </span><span class="z">高位集中</span><span class="a"> </span><span class="a k">AND</span><span class="a"> </span><span class="z">低位与高位集中</span><span class="a"> </span><span class="a k">AND</span><span class="a"> </span><span class="z">今日涨停</span><span class="a">;</span></div><div class="ln"><span class="z">结构</span><span class="a">5</span><span class="a">:=</span><span class="z">低位集中</span><span class="a"> </span><span class="a k">AND</span><span class="a"> </span><span class="z">高位集中</span><span class="a"> </span><span class="a k">AND</span><span class="a"> </span><span class="z">低位与中位集中</span><span class="a"> </span><span class="a k">AND</span><span class="a"> </span><span class="z">今日涨停</span><span class="a">;</span></div></div></div>
<div class="sb" style="left:752px;top:228px;width:14px;height:311px;"><div class="th" style="left:0;top:17px;width:14px;height:187px"></div><svg class="ar" style="left:3px;top:6px" width="9" height="6" viewBox="0 0 9 6"><path d="M0.7 5 L4.5 1.2 L8.3 5" fill="none" stroke="#555555" stroke-width="2"/></svg><svg class="ar" style="left:3px;top:299px" width="9" height="6" viewBox="0 0 9 6"><path d="M0.7 1 L4.5 4.8 L8.3 1" fill="none" stroke="#555555" stroke-width="2"/></svg></div>
<div class="sb" style="left:2px;top:539px;width:764px;height:17px;"><div class="th" style="left:18px;top:0px;width:664px;height:15px"></div><svg class="ar" style="left:6px;top:3px" width="6" height="9" viewBox="0 0 6 9"><path d="M4.8 1.2 L1.5 4.5 L4.8 7.8" fill="none" stroke="#555555" stroke-width="2"/></svg><svg class="ar" style="left:738px;top:3px" width="6" height="9" viewBox="0 0 6 9"><path d="M1.2 1.2 L4.5 4.5 L1.2 7.8" fill="none" stroke="#555555" stroke-width="2"/></svg></div>
<div class="" style="left:1px;top:559px;width:766px;height:1px;position:absolute;background:#A0A0A0"></div>
<div class="" style="left:1px;top:561px;width:707px;height:101px;position:absolute;background:#A0A0A0"></div>
<div class="" style="left:2px;top:562px;width:687px;height:100px;position:absolute;background:#fff"><span style="position:absolute;left:4px;top:3px;line-height:16px">测试通过! 代码长度:1479,输出线个数:1</span></div>
<div class="" style="left:689px;top:562px;width:18px;height:100px;position:absolute;background:#F3F2F0"></div>
<div class="" style="left:707px;top:562px;width:1px;height:100px;position:absolute;background:#A0A0A0"></div>
<div class="rb" style="left:711px;top:562px;width:55px;height:24px;">动态翻译</div>
<div class="rb dn" style="left:711px;top:589px;width:54px;height:25px;">测试结果</div>
<div class="rb" style="left:711px;top:617px;width:55px;height:25px;">参数精灵</div>
<div class="rb" style="left:711px;top:645px;width:55px;height:25px;">用法注释</div>
</div>
</div></body></html>
